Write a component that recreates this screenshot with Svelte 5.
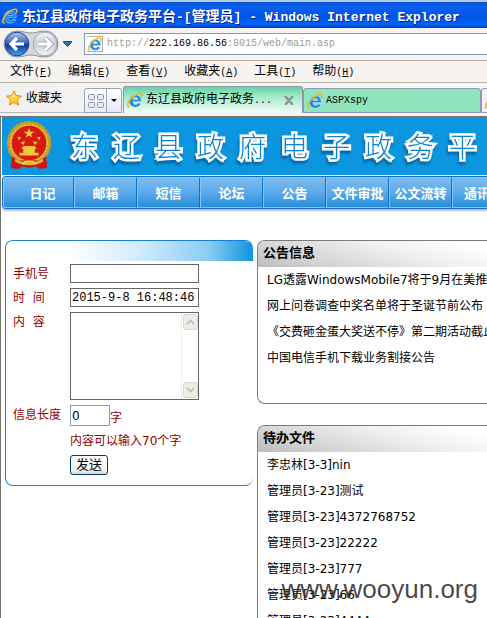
<script>
  const menus = [['文件', 'F'], ['编辑', 'E'], ['查看', 'V'], ['收藏夹', 'A'], ['工具', 'T'], ['帮助', 'H']];
  const banner = [...'东辽县政府电子政务平'];
  const nav = ['日记', '邮箱', '短信', '论坛', '公告', '文件审批', '公文流转', '通讯录'];
  const notices = [
    'LG透露WindowsMobile7将于9月在美推出',
    '网上问卷调查中奖名单将于圣诞节前公布',
    '《交费砸金蛋大奖送不停》第二期活动截止',
    '中国电信手机下载业务割接公告'
  ];
  const files = ['李忠林[3-3]nin', '管理员[3-23]测试', '管理员[3-23]4372768752', '管理员[3-23]22222', '管理员[3-23]777', '管理员[3-23]66', '管理员[3-23]4444'];
  let phone = $state('');
  let time = $state('2015-9-8 16:48:46');
  let content = $state('');
  let count = $state('0');
</script>

{#snippet ie()}
  <svg class="ie" viewBox="0 0 16 16" aria-hidden="true">
    <path d="M14.3 9.6H5.8c.2 2 1.2 2.9 2.7 2.9 1.1 0 1.8-.4 2.2-1.2h3.3c-.8 2.4-2.8 3.8-5.6 3.8-3.800 0-6.100-2.300-6.100-6 0-3.800 2.400-6.200 6.100-6.200 3.900 0 6.100 2.500 5.900 6.700zM5.900 7.500h5c-.2-1.500-1-2.200-2.400-2.200-1.500 0-2.400.8-2.600 2.200z" fill="#1f86e4" stroke="#bfe6ff" stroke-width=".5" />
    <path d="M3.500 6.200c1.200-1.900 3-2.700 5-2.700" fill="none" stroke="#6cc9ff" stroke-width="1.200" />
    <path d="M2.200 14.800C.2 15 .3 12.200 2.300 9 5 4.800 9.600 1.300 12.800 1.200c2-.1 2.500 1.400 1.500 3.600" fill="none" stroke="#f2b51d" stroke-width="1.500" stroke-linecap="round" />
  </svg>
{/snippet}

<div class="window">
  <header class="title">
    {@render ie()}
    <h1>东辽县政府电子政务平台<span>-[</span>管理员<span>] - Windows Internet Explorer</span></h1>
  </header>

  <div class="address">
    <svg class="arrows" viewBox="0 0 56 30" role="img" aria-label="后退 前进">
      <defs>
        <linearGradient id="back" x1="0" y1="0" x2="0" y2="1">
          <stop offset="0" stop-color="#b4c8ee" /><stop offset=".45" stop-color="#3a68bd" /><stop offset=".55" stop-color="#0c3a98" /><stop offset="1" stop-color="#45a8ee" />
        </linearGradient>
        <linearGradient id="fwd" x1="0" y1="0" x2="0" y2="1">
          <stop offset="0" stop-color="#f7f8fa" /><stop offset=".5" stop-color="#c9cdd6" /><stop offset="1" stop-color="#f4f6fa" />
        </linearGradient>
      </defs>
      <path d="M14 2c6 0 8 2 14 2s8-2 14-2a13 13 0 0 1 0 26c-6 0-9-2-14-2s-8 2-14 2a13 13 0 0 1 0-26z" fill="#d4d6dc" stroke="#8c909b" />
      <circle cx="14" cy="15" r="11.800" fill="url(#back)" stroke="#173e8c" />
      <circle cx="42" cy="15" r="11.800" fill="url(#fwd)" stroke="#a0a5b1" />
      <path d="M21 15H9M14 9l-6 6 6 6" fill="none" stroke="#fff" stroke-width="3.200" />
      <path d="M35 15h12M42 9l6 6-6 6" fill="none" stroke="#999eaa" stroke-width="4.400" />
      <path d="M35 15h12M42 9l6 6-6 6" fill="none" stroke="#fff" stroke-width="2.800" />
    </svg>
    <svg class="drop" viewBox="0 0 9 6" aria-hidden="true"><path d="M.5.500h8v1l-4 4-4-4z" fill="#2d70b8" stroke="#174c8b" /></svg>
    <div class="url">
      <span class="doc">{@render ie()}</span>
      <span class="mono">http://<b>222.169.86.56</b>:8015/web/main.asp</span>
    </div>
  </div>

  <nav class="menu" aria-label="菜单">
    {#each menus as [name, key]}
      <button>{name}<span class="mono">(<u>{key}</u>)</span></button>
    {/each}
  </nav>

  <div class="tabs">
    <button class="fav">
      <svg viewBox="0 0 16 16" aria-hidden="true"><path d="M8 .800l2.200 4.800 5.200.6-3.900 3.500 1.100 5.300L8 12.400 3.400 15l1.100-5.300L.6 6.200l5.200-.6z" fill="#ffd23c" stroke="#d98a10" /><path d="M8 3l1.300 3.500L5 8z" fill="#fff2a8" /></svg>
      收藏夹
    </button>
    <div class="quick">
      <button aria-label="快速导航选项卡"><svg viewBox="0 0 16 14" aria-hidden="true"><g fill="#eef0f8" stroke="#8d92a8"><rect x=".5" y=".5" width="6" height="5" rx="1" /><rect x="9.500" y=".5" width="6" height="5" rx="1" /><rect x=".5" y="8.500" width="6" height="5" rx="1" /><rect x="9.500" y="8.500" width="6" height="5" rx="1" /></g></svg></button>
      <button class="more" aria-label="选项卡列表"><i></i></button>
    </div>
    <div class="tab active">
      {@render ie()}
      <span>东辽县政府电子政务<span class="mono">...</span></span>
      <button class="close" aria-label="关闭"><svg viewBox="0 0 10 9" aria-hidden="true"><path d="M1 0l8 9M9 0L1 9" stroke="#8d9392" stroke-width="2.400" /></svg></button>
    </div>
    <div class="tab other">{@render ie()}<span class="mono">ASPXspy</span></div>
    <div class="tab last">{@render ie()}</div>
  </div>

  <main>
    <div class="banner">
      <svg class="emblem" viewBox="0 0 48 50" role="img" aria-label="国徽">
        <circle cx="23" cy="22" r="20.500" fill="#d91a12" stroke="#cda52c" stroke-width="5" />
        <circle cx="23" cy="22" r="22" fill="none" stroke="#8e6c16" stroke-width="1" stroke-dasharray="1 2" />
        <circle cx="23" cy="22" r="19" fill="none" stroke="#f3d45a" stroke-width="1" stroke-dasharray="2 2" />
        <path d="M5 36l8 4h20l8-4 1 12-8 1-4-3-7 2-7-2-4 3-8-1z" fill="#d01511" />
        <path d="M9 38c4 3 8 4 14 4s10-1 14-4l1 3c-4 3-9 4-15 4s-11-1-15-4z" fill="#dfb43b" />
        <path d="M16 44c3-4 11-4 14 0" fill="none" stroke="#f4d159" stroke-width="2" />
        <path d="M23 6l1.400 4h4.200l-3.400 2.500 1.300 4L23 14l-3.500 2.500 1.300-4-3.400-2.500h4.200z" fill="#f5cf42" />
        <path d="M11 15l4 1-3 3zM14 21l5-1-2 4zM35 15l-4 1 3 3zM32 21l-5-1 2 4z" fill="#f0bf38" />
        <path d="M15 28h16l-2-3H17zM17 28h12v4h4v3H13v-3h4z" fill="#f3c83c" />
      </svg>
      <div class="words">{#each banner as c}<span>{c}</span>{/each}</div>
    </div>

    <nav class="bar" aria-label="主导航">
      {#each nav as n}<a href="#top">{n}</a>{/each}
    </nav>

    <div class="columns">
      <form class="sms" onsubmit={(e) => e.preventDefault()}>
        <div class="shade"></div>
        <div class="fields">
          <label for="phone">手机号</label>
          <input id="phone" bind:value={phone} />
          <label for="time">时&nbsp; 间</label>
          <input id="time" bind:value={time} />
          <label for="content">内&nbsp; 容</label>
          <div class="area">
            <textarea id="content" bind:value={content}></textarea>
            <div class="scroll" aria-hidden="true">
              <svg viewBox="0 0 15 16"><rect x=".5" y=".5" width="14" height="15" rx="2" fill="#efeee6" stroke="#d8d6c6" /><path d="M4 10l3.500-3.500L11 10" fill="none" stroke="#c5c4ba" stroke-width="2" /></svg>
              <svg viewBox="0 0 15 16"><rect x=".5" y=".5" width="14" height="15" rx="2" fill="#efeee6" stroke="#d8d6c6" /><path d="M4 6l3.500 3.500L11 6" fill="none" stroke="#c5c4ba" stroke-width="2" /></svg>
            </div>
          </div>
          <label for="count">信息长度</label>
          <div class="len"><input id="count" bind:value={count} /><span>字</span></div>
          <p>内容可以输入70个字</p>
          <button class="send">发送</button>
        </div>
      </form>

      <div class="side">
        <section class="notice">
          <h2>公告信息</h2>
          <ul>{#each notices as n}<li>{n}</li>{/each}</ul>
        </section>
        <section>
          <h2>待办文件</h2>
          <ul>{#each files as f}<li>{f}</li>{/each}</ul>
        </section>
      </div>
    </div>
  </main>
  <div class="mark">www.wooyun.org</div>
</div>

<style>
  .window {
    position: relative;
    display: flex;
    flex-direction: column;
    height: 100vh;
    overflow: hidden;
    background: #fff;
    color: #000;
    font: 12px/16px "DejaVu Sans", "Noto Sans CJK SC", sans-serif;
    white-space: nowrap;
  }
  * { box-sizing: border-box; }
  button, input, textarea {
    margin: 0;
    padding: 0;
    border: 0;
    background: none;
    color: inherit;
    font: inherit;
  }
  svg { display: block; flex: none; }
  .mono { font-family: "Liberation Mono", monospace; font-size: 10px; }
  .ie { width: 16px; height: 16px; }

  .title {
    display: flex;
    flex: none;
    align-items: center;
    gap: 4px;
    height: 28px;
    padding: 2px 2px 0;
    border-top: 2px solid #a9cbe4;
    background: linear-gradient(#0a50d0, #0a5ff0 20%, #0054e6 60%, #0066ff 85%, #003dc0);
    color: #fff;
  }
  h1 {
    margin: 0;
    font: bold 14px/20px "Noto Sans CJK SC", sans-serif;
    text-shadow: 1px 1px 0 #0a1f80;
    white-space: pre;
  }
  h1 span { font-family: "Liberation Mono", monospace; font-size: 13px; }

  .address {
    display: flex;
    flex: none;
    align-items: center;
    height: 33px;
    padding-left: 3px;
    border-bottom: 1px solid #b5b2a4;
    background: linear-gradient(90deg, #f3f2ef, #f8f3f7);
  }
  .arrows { width: 56px; height: 30px; }
  .drop { width: 9px; height: 6px; margin: 0 12px 0 4px; }
  .url {
    display: flex;
    flex: 1;
    align-items: center;
    gap: 4px;
    height: 22px;
    padding-left: 2px;
    border: 1px solid #7f9db9;
    border-right: 0;
    background: #fff;
    color: #a09c8c;
  }
  .url b { color: #000; font-weight: normal; }
  .doc { padding: 0 0 0 1px; border: 1px solid #b0b0a8; border-left: 0; }
  .doc .ie { width: 14px; height: 14px; }

  .menu {
    display: flex;
    flex: none;
    align-items: center;
    gap: 16px;
    height: 22px;
    padding-left: 10px;
    border-bottom: 1px solid #b5b2a4;
    background: #f6f3f1;
  }

  .tabs {
    display: flex;
    flex: none;
    align-items: flex-end;
    height: 33px;
    padding-bottom: 3px;
    overflow: hidden;
    background: linear-gradient(90deg, #f3f1ee, #f5f6fc);
  }
  .fav {
    display: flex;
    flex: none;
    align-items: center;
    gap: 4px;
    width: 84px;
    height: 30px;
    padding-left: 6px;
    border-bottom: 1px solid #b4b6c0;
  }
  .fav svg { width: 16px; height: 16px; }
  .quick {
    display: flex;
    flex: none;
    width: 38px;
    height: 25px;
    border: 1px solid #9aa1b5;
    border-radius: 3px 3px 0 0;
    background: linear-gradient(#fff, #e4e9f8);
  }
  .quick button { display: grid; flex: 1; place-items: center; }
  .quick svg { width: 16px; height: 14px; }
  .quick .more { flex: 0 0 15px; border-left: 1px solid #9aa1b5; }
  .more i { border: 3px solid transparent; border-top-color: #000; border-bottom: 0; }
  .tab {
    display: flex;
    flex: none;
    align-items: center;
    gap: 3px;
    height: 25px;
    padding-left: 3px;
    border: 1px solid #8f97a8;
    border-radius: 3px 3px 0 0;
    background: #90e5bf;
  }
  .active {
    width: 180px;
    height: 27px;
    margin-left: 1px;
    border-bottom: 0;
    background: linear-gradient(#62d5a1, #a8ebcc 40%, #f4fbfa);
  }
  .other { width: 178px; }
  .last { width: 20px; background: #eef1fb; }
  .close { margin: 0 8px 0 auto; }
  .close svg { width: 10px; height: 9px; }

  main {
    flex: 1;
    min-height: 0;
    overflow: hidden;
    padding-left: 1px;
    border-top: 1px solid #77756a;
    border-left: 1px solid #77756a;
  }
  .banner {
    display: flex;
    align-items: center;
    height: 59px;
    padding-left: 5px;
    border-bottom: 1px solid #fff;
    background: #0b96df;
  }
  .emblem { width: 46px; height: 50px; }
  .words {
    display: flex;
    padding-left: 18px;
    filter: drop-shadow(-1px 3px 1px #0668a8);
  }
  .words span {
    flex: none;
    width: 42px;
    color: #0b83cc;
    font: 300 27px/40px "Noto Sans CJK SC", sans-serif;
    -webkit-text-stroke: 5px #fff;
    stroke-linejoin: round;
    paint-order: stroke fill;
  }
  .bar {
    display: flex;
    height: 33px;
    overflow: hidden;
    border: solid #0d72c4;
    border-width: 1px 0 1px 1px;
    border-radius: 4px 0 0 4px;
    box-shadow: 0 2px 2px #bbb;
  }
  .bar a {
    flex: 0 0 63px;
    border: 1px solid #86c4f7;
    border-right-color: #0d72c4;
    background: linear-gradient(#7cbcf1, #5caae9 50%, #258fdc);
    color: #fff;
    font-size: 13px;
    font-weight: bold;
    line-height: 31px;
    text-align: center;
    text-decoration: none;
  }
  .bar a:first-child { flex-basis: 71px; padding-left: 8px; }

  .columns { display: flex; gap: 4px; padding: 31px 0 0 3px; }
  .sms {
    flex: none;
    width: 248px;
    height: 246px;
    overflow: hidden;
    border: solid #1c80d0;
    border-width: 1px 0 1px 1px;
    border-radius: 8px;
    color: #900;
  }
  .shade { height: 20px; background: linear-gradient(90deg, #fff 25%, #d0eaff 55%, #8bcdf2 82%, #0c94de); }
  .fields {
    display: grid;
    grid-template-columns: 57px 129px;
    align-items: start;
    padding: 3px 0 0 7px;
  }
  .fields label { padding-top: 2px; }
  .fields input, .area { height: 19px; border: 1px solid #666; background: #fff; color: #000; }
  .fields input { width: 129px; margin-bottom: 5px; padding-left: 1px; font: 12px "Liberation Mono", monospace; }
  .fields .area { display: flex; height: 88px; margin-bottom: 5px; }
  .area textarea { flex: 1; min-width: 0; resize: none; outline: 0; }
  .scroll { display: flex; flex-direction: column; justify-content: space-between; width: 17px; padding: 1px; border-left: 1px solid #eee; }
  .scroll svg { width: 15px; height: 16px; }
  .len { display: flex; align-items: flex-end; height: 21px; }
  .fields .len input { width: 40px; height: 21px; margin: 0; border-color: #7f9db9; font-family: "DejaVu Sans", sans-serif; }
  .len span { height: 16px; }
  p { grid-column: 2; margin: 7px 0 6px; }
  .send {
    grid-column: 2;
    width: 38px;
    height: 20px;
    border: 1px solid #003c74;
    border-radius: 3px;
    background: linear-gradient(#fff, #f3f2ec 80%, #d8d2c8);
    color: #000;
    font-size: 13px;
    line-height: 16px;
  }
  .side { flex: 1; min-width: 0; }
  section {
    height: 220px;
    margin-bottom: 21px;
    overflow: hidden;
    border: 1px solid #7b7b7b;
    border-right: 0;
    border-radius: 8px 0 0 8px;
  }
  .notice { height: 164px; }
  h2 {
    height: 26px;
    margin: 0;
    padding-left: 5px;
    background: linear-gradient(15deg, #bcbcbc, #d4d4d4 25%, #f0eef0 60%, #fff 90%);
    font-size: 13px;
    line-height: 24px;
  }
  ul { margin: 0; padding: 0 0 0 9px; list-style: none; }
  li { line-height: 26px; }

  .mark {
    position: absolute;
    right: 9px;
    bottom: 14px;
    color: rgba(50, 50, 50, .9);
    font: 26px/30px "Liberation Sans", sans-serif;
  }
</style>
